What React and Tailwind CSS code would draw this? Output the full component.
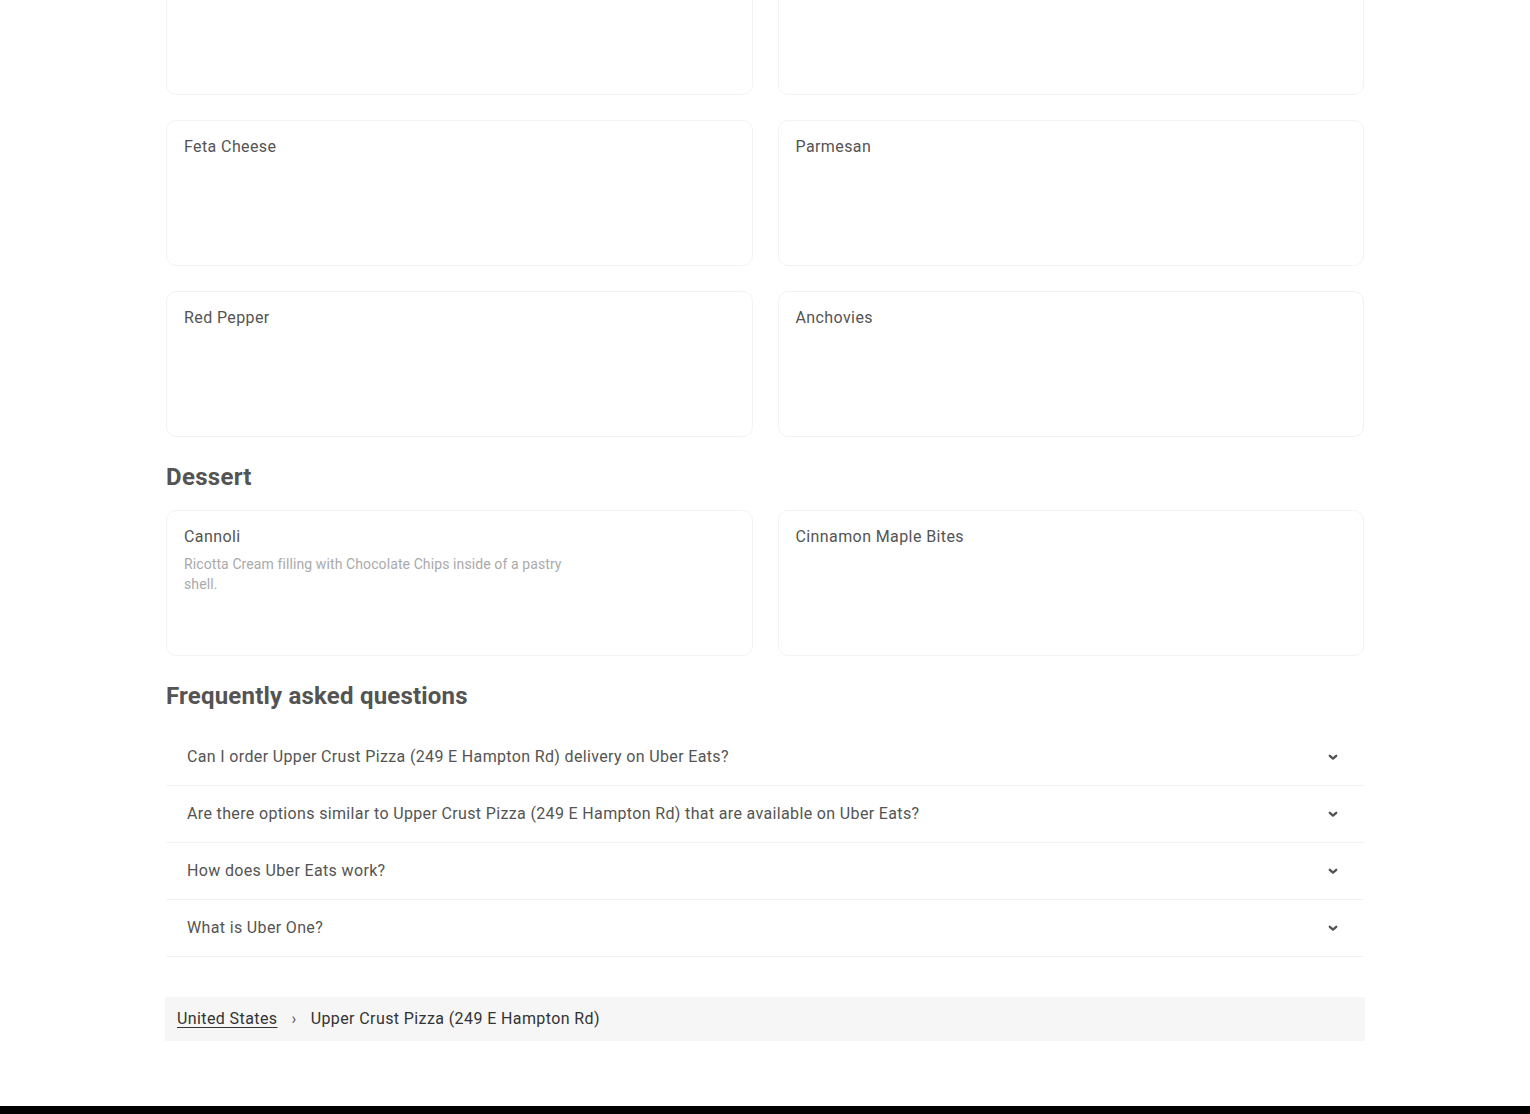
import React from "react";

const rows = [
  ["", ""],
  ["Feta Cheese", "Parmesan"],
  ["Red Pepper", "Anchovies"],
];

const faqs = [
  "Can I order Upper Crust Pizza (249 E Hampton Rd) delivery on Uber Eats?",
  "Are there options similar to Upper Crust Pizza (249 E Hampton Rd) that are available on Uber Eats?",
  "How does Uber Eats work?",
  "What is Uber One?",
];

function ItemCard({ title, desc }) {
  return (
    <div className="h-[146px] rounded-[10px] border border-[#f3f3f3] bg-white px-[17px] pt-[15px]">
      {title && <div className="text-[16px] leading-[22px] tracking-[0.4px] text-[#545454]">{title}</div>}
      {desc && (
        <p className="mt-[6px] w-[398px] text-[14px] leading-[20px] tracking-[0.1px] text-[#aaaaaa]">{desc}</p>
      )}
    </div>
  );
}

function Chevron() {
  return (
    <svg width="12" height="12" viewBox="0 0 12 12" className="text-[#545454]">
      <path d="M2.8 4.8 L6 7.6 L9.2 4.8" fill="none" stroke="currentColor" strokeWidth="2.4" strokeLinecap="round" strokeLinejoin="round" />
    </svg>
  );
}

export default function App() {
  return (
    <div className="h-[1114px] overflow-hidden bg-white font-['Roboto',sans-serif]">
      <div className="mx-auto w-[1200px]">
        <div className="-mt-[51px] flex flex-col gap-[25px] px-[1px]">
          {rows.map((r, i) => (
            <div key={i} className="grid grid-cols-2 gap-[25px]">
              <ItemCard title={r[0]} />
              <ItemCard title={r[1]} />
            </div>
          ))}
        </div>

        <h2 className="mt-[24px] px-[1px] text-[24px] font-bold leading-[32px] tracking-[0.3px] text-[#545454]">Dessert</h2>
        <div className="mt-[17px] grid grid-cols-2 gap-[25px] px-[1px]">
          <ItemCard title="Cannoli" desc="Ricotta Cream filling with Chocolate Chips inside of a pastry shell." />
          <ItemCard title="Cinnamon Maple Bites" />
        </div>

        <h2 className="mt-[24px] px-[1px] text-[24px] font-bold leading-[32px] tracking-[0.2px] text-[#545454]">Frequently asked questions</h2>
        <div className="mt-[17px] px-[1px]">
          {faqs.map((q) => (
            <div key={q} className="flex h-[57px] items-center justify-between border-b border-[#f3f3f3] pl-[21px] pr-[25px]">
              <span className="text-[16px] tracking-[0.35px] text-[#545454]">{q}</span>
              <Chevron />
            </div>
          ))}
        </div>

        <div className="mt-[40px] flex h-[44px] items-center gap-[11px] bg-[#f6f6f6] px-[12px] text-[16px] tracking-[0.4px] text-[#333333]">
          <span className="underline underline-offset-[3px]">United States</span>
          <span className="px-[3px] text-[#545454]">›</span>
          <span>Upper Crust Pizza (249 E Hampton Rd)</span>
        </div>
      </div>
      <div className="mt-[65px] h-[10px] bg-black" />
    </div>
  );
}
